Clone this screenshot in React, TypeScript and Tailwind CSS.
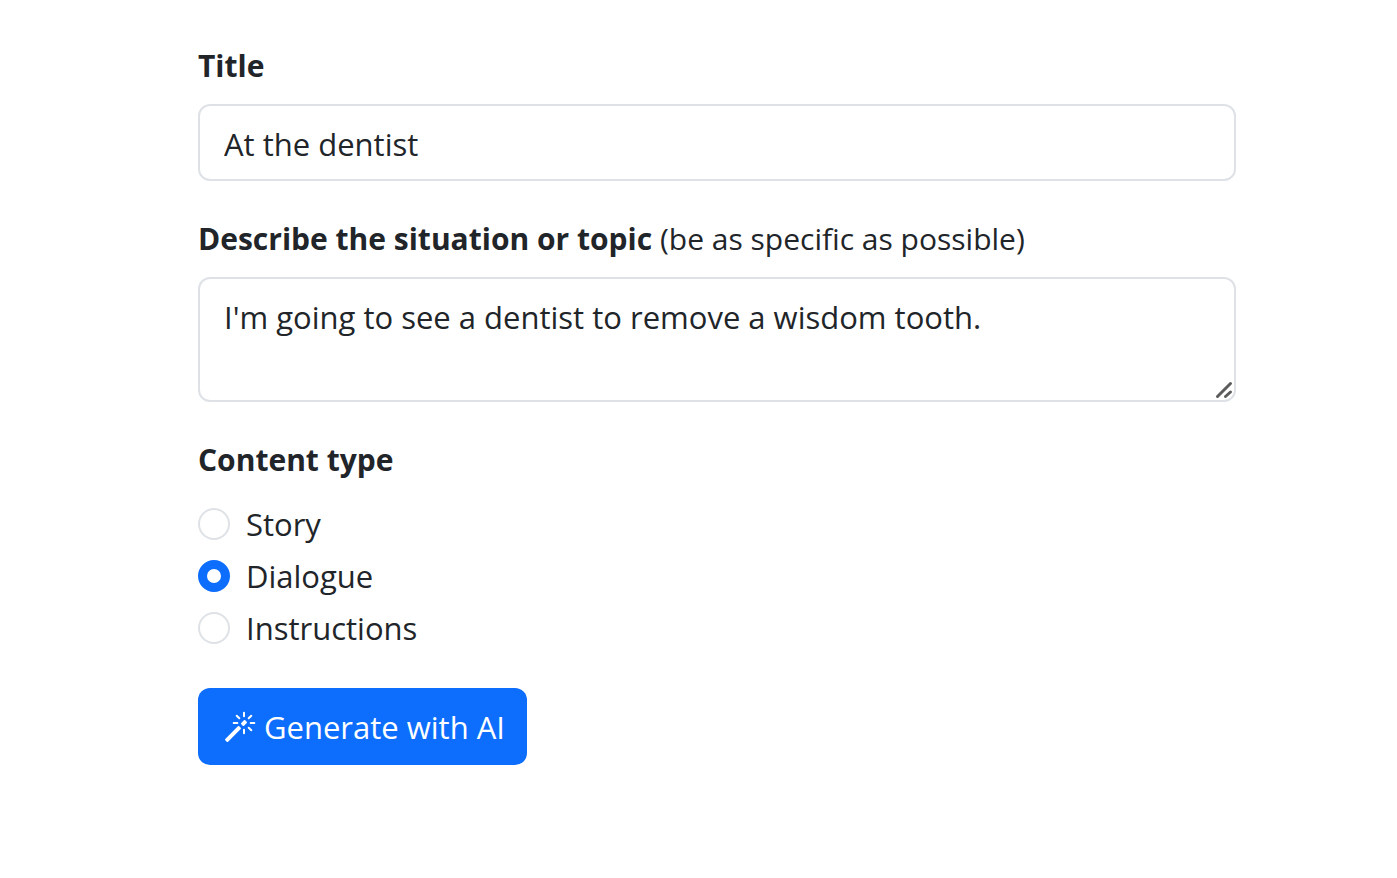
import { useState } from "react";
import { BsMagic } from "react-icons/bs";

const contentTypes = ["Story", "Dialogue", "Instructions"];

export default function App() {
  const [title, setTitle] = useState("At the dentist");
  const [topic, setTopic] = useState("I'm going to see a dentist to remove a wisdom tooth.");
  const [contentType, setContentType] = useState("Dialogue");

  return (
    <main className="min-h-screen bg-white pt-[42px] pb-12 pl-[198px] pr-[161px] font-['Open_Sans',sans-serif] text-[31px] leading-[48px] text-[#212529]">
      <form onSubmit={(e) => e.preventDefault()}>
        <div className="mb-[34px]">
          <label htmlFor="title" className="mb-[14px] block text-[30px] leading-[48px] font-bold">
            Title
          </label>
          <input
            id="title"
            type="text"
            value={title}
            onChange={(e) => setTitle(e.target.value)}
            className="block h-[77px] w-full rounded-xl border-2 border-[#dee2e6] bg-white px-6 pt-0.5 outline-none focus:border-[#86b7fe]"
          />
        </div>

        <div className="mb-[34px]">
          <label htmlFor="topic" className="mb-[14px] block text-[30px] leading-[48px]">
            <span className="font-bold">Describe the situation or topic</span> (be as specific as possible)
          </label>
          <div className="relative">
            <textarea
              id="topic"
              value={topic}
              onChange={(e) => setTopic(e.target.value)}
              className="block h-[125px] w-full resize-y rounded-xl border-2 border-[#dee2e6] bg-white px-6 pt-[14px] pb-3 outline-none focus:border-[#86b7fe] [&::-webkit-resizer]:bg-transparent"
            />
            <svg
              viewBox="0 0 18 18"
              className="pointer-events-none absolute right-[3px] bottom-[3px] size-[18px]"
              fill="none"
              stroke="#5c5c5c"
              strokeWidth="3"
              strokeLinecap="round"
              aria-hidden="true"
            >
              <path d="M2.5 15.5 15.5 2.5M10.5 15.5l5-4.5" />
            </svg>
          </div>
        </div>

        <fieldset className="mb-8">
          <legend className="mb-4 text-[30px] leading-[48px] font-bold">Content type</legend>
          {contentTypes.map((type) => (
            <label key={type} className="mb-1 flex w-fit items-center gap-4">
              <input
                type="radio"
                name="content-type"
                value={type}
                checked={contentType === type}
                onChange={() => setContentType(type)}
                className="size-8 appearance-none rounded-full border-2 border-[#dee2e6] bg-white checked:border-[9px] checked:border-[#0d6efd]"
              />
              {type}
            </label>
          ))}
        </fieldset>

        <button
          type="submit"
          className="flex h-[77px] items-center gap-2 rounded-xl bg-[#0d6efd] pr-[22px] pl-[26px] text-white hover:bg-[#0b5ed7]"
        >
          <BsMagic className="size-8" aria-hidden="true" />
          Generate with AI
        </button>
      </form>
    </main>
  );
}
